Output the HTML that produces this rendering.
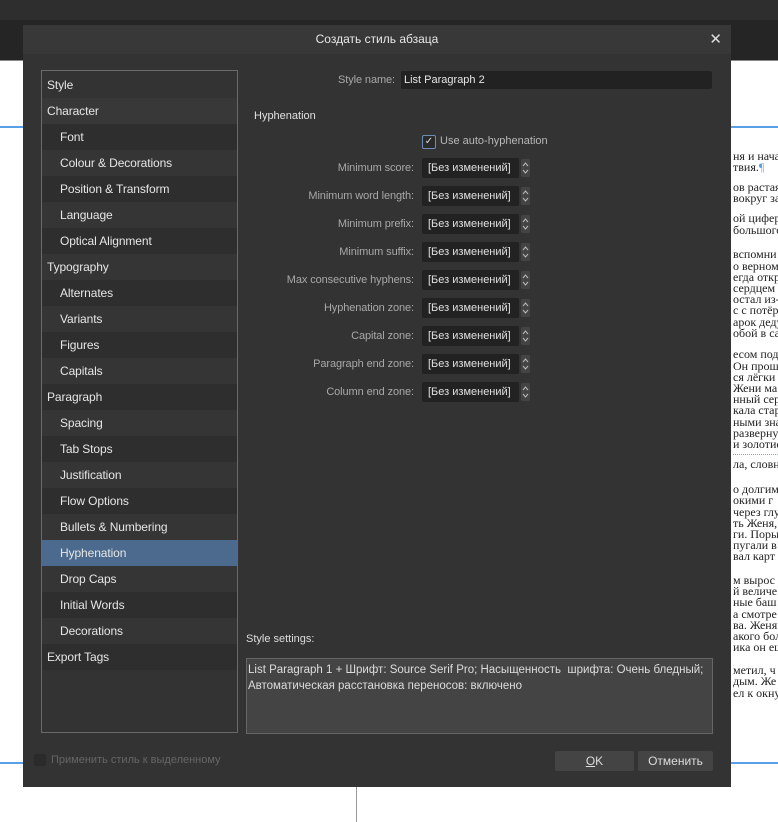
<!DOCTYPE html>
<html><head><meta charset="utf-8"><style>
*{margin:0;padding:0;box-sizing:border-box}
body{width:778px;height:822px;overflow:hidden;background:#fff;position:relative;font-family:"Liberation Sans","DejaVu Sans",sans-serif;font-size:12px;color:#ddd}
.a{position:absolute}
.row{position:absolute;left:0;width:195px;height:26px;line-height:26px;color:#e6e6e6;font-size:12px;letter-spacing:-0.1px}
.lbl{position:absolute;right:364px;color:#a8a8a8;font-size:11px;white-space:nowrap;letter-spacing:-0.1px}
.fld{position:absolute;left:422px;width:97px;height:20px;background:#222;border-radius:2px;color:#e0e0e0;font-size:11px;line-height:20px;padding-left:6px}
.sp{position:absolute;left:521px;width:9px;height:18px;background:#444;border-radius:2px}
.sp svg{position:absolute;left:1px;top:2px}
.rt{position:absolute;left:733px;font-family:"Liberation Serif",serif;font-size:12px;color:#222;white-space:nowrap;line-height:12px}
</style></head><body>
<div class="a" style="left:0;top:0;width:778px;height:20px;background:#2e2e2e"></div>
<div class="a" style="left:0;top:20px;width:778px;height:40px;background:#252525"></div>
<div class="a" style="left:0;top:60px;width:778px;height:1px;background:#888"></div>
<div class="a" style="left:0;top:126px;width:23px;height:2px;background:#5aa0e6"></div>
<div class="a" style="left:731px;top:126px;width:47px;height:2px;background:#5aa0e6"></div>
<div class="a" style="left:0;top:762px;width:23px;height:2px;background:#5aa0e6"></div>
<div class="a" style="left:731px;top:762px;width:47px;height:2px;background:#5aa0e6"></div>
<div class="a" style="left:356px;top:787px;width:1px;height:35px;background:#999"></div>

<div class="rt" style="top:150px">ня и нача</div>
<div class="rt" style="top:161px">твия.<span style="color:#5aa0e6">¶</span></div>
<div class="rt" style="top:181px">ов растая</div>
<div class="rt" style="top:192px">вокруг за</div>
<div class="rt" style="top:212px">ой цифер</div>
<div class="rt" style="top:224px">большого</div>
<div class="rt" style="top:248px">вспомни</div>
<div class="rt" style="top:260px">о верном</div>
<div class="rt" style="top:271px">егда откр</div>
<div class="rt" style="top:282px">сердцем</div>
<div class="rt" style="top:293px">остал из-</div>
<div class="rt" style="top:304px">с с потёр</div>
<div class="rt" style="top:316px">арок деду</div>
<div class="rt" style="top:327px">обой в са</div>
<div class="rt" style="top:348px">есом под</div>
<div class="rt" style="top:360px">Он прош</div>
<div class="rt" style="top:371px">ся лёгки</div>
<div class="rt" style="top:382px">Жени ма</div>
<div class="rt" style="top:393px">нный сер</div>
<div class="rt" style="top:404px">кала стар</div>
<div class="rt" style="top:416px">ными зна</div>
<div class="rt" style="top:427px">развернул</div>
<div class="rt" style="top:438px">и золотис</div>
<div class="a" style="left:733px;top:454px;width:45px;border-top:1px dotted #8ab"></div>
<div class="rt" style="top:458px">ла, словн</div>
<div class="rt" style="top:483px">о долгим</div>
<div class="rt" style="top:494px">окими г</div>
<div class="rt" style="top:506px">через глу</div>
<div class="rt" style="top:517px">ть Женя,</div>
<div class="rt" style="top:528px">ги. Поры</div>
<div class="rt" style="top:539px">пугали в</div>
<div class="rt" style="top:550px">вал карт</div>
<div class="rt" style="top:574px">м вырос</div>
<div class="rt" style="top:585px">й величе</div>
<div class="rt" style="top:596px">ные баш</div>
<div class="rt" style="top:608px">а смотре</div>
<div class="rt" style="top:619px">ва. Женя</div>
<div class="rt" style="top:630px">акого бол</div>
<div class="rt" style="top:641px">ика он ещ</div>
<div class="rt" style="top:664px">метил, ч</div>
<div class="rt" style="top:675px">дым. Же</div>
<div class="rt" style="top:687px">ел к окну</div>

<div class="a" style="left:23px;top:25px;width:708px;height:762px;background:#333">
 <div class="a" style="left:0;top:0;width:708px;height:29px;background:#383838;text-align:center;line-height:29px;color:#e8e8e8;font-size:12px">Создать стиль абзаца</div>
 <div class="a" style="right:9px;top:5px;color:#ddd;font-size:15px">✕</div>
</div>

<div class="a" style="left:41px;top:70px;width:197px;height:663px;border:1px solid #6a6a6a;background:#333">
 <div class="row" style="top:1px;background:#333;padding-left:5px">Style</div>
 <div class="row" style="top:27px;background:#383838;padding-left:5px">Character</div>
 <div class="row" style="top:53px;background:#2e2e2e;padding-left:18px">Font</div>
 <div class="row" style="top:79px;background:#353535;padding-left:18px">Colour &amp; Decorations</div>
 <div class="row" style="top:105px;background:#2e2e2e;padding-left:18px">Position &amp; Transform</div>
 <div class="row" style="top:131px;background:#353535;padding-left:18px">Language</div>
 <div class="row" style="top:157px;background:#2e2e2e;padding-left:18px">Optical Alignment</div>
 <div class="row" style="top:183px;background:#353535;padding-left:5px">Typography</div>
 <div class="row" style="top:209px;background:#2e2e2e;padding-left:18px">Alternates</div>
 <div class="row" style="top:235px;background:#353535;padding-left:18px">Variants</div>
 <div class="row" style="top:261px;background:#2e2e2e;padding-left:18px">Figures</div>
 <div class="row" style="top:287px;background:#353535;padding-left:18px">Capitals</div>
 <div class="row" style="top:313px;background:#2e2e2e;padding-left:5px">Paragraph</div>
 <div class="row" style="top:339px;background:#353535;padding-left:18px">Spacing</div>
 <div class="row" style="top:365px;background:#2e2e2e;padding-left:18px">Tab Stops</div>
 <div class="row" style="top:391px;background:#353535;padding-left:18px">Justification</div>
 <div class="row" style="top:417px;background:#2e2e2e;padding-left:18px">Flow Options</div>
 <div class="row" style="top:443px;background:#353535;padding-left:18px">Bullets &amp; Numbering</div>
 <div class="row" style="top:469px;background:#4b6a8d;padding-left:18px">Hyphenation</div>
 <div class="row" style="top:495px;background:#353535;padding-left:18px">Drop Caps</div>
 <div class="row" style="top:521px;background:#2e2e2e;padding-left:18px">Initial Words</div>
 <div class="row" style="top:547px;background:#353535;padding-left:18px">Decorations</div>
 <div class="row" style="top:573px;background:#2e2e2e;padding-left:5px">Export Tags</div>
</div>

<div class="lbl" style="top:74px;right:383px">Style name:</div>
<div class="a" style="left:401px;top:71px;width:311px;height:18px;background:#222;border-radius:2px;color:#e6e6e6;font-size:11px;line-height:18px;padding-left:3px">List Paragraph 2</div>
<div class="a" style="left:254px;top:110px;color:#e0e0e0;font-size:11px">Hyphenation</div>
<div class="a" style="left:422px;top:135px;width:14px;height:14px;border:1px solid #6d8fb5;border-radius:2px;background:#2a2a2a;color:#ddd;font-size:10px;line-height:12px;text-align:center">✓</div>
<div class="a" style="left:440px;top:135px;color:#b8b8b8;font-size:11px">Use auto-hyphenation</div>

<div class="lbl" style="top:162px">Minimum score:</div><div class="fld" style="top:158px">[Без изменений]</div><div class="sp" style="top:159px"><svg width="7" height="14"><path d="M1 5 L3.5 2 L6 5 M1 9 L3.5 12 L6 9" stroke="#bbb" fill="none"/></svg></div>
<div class="lbl" style="top:190px">Minimum word length:</div><div class="fld" style="top:186px">[Без изменений]</div><div class="sp" style="top:187px"><svg width="7" height="14"><path d="M1 5 L3.5 2 L6 5 M1 9 L3.5 12 L6 9" stroke="#bbb" fill="none"/></svg></div>
<div class="lbl" style="top:218px">Minimum prefix:</div><div class="fld" style="top:214px">[Без изменений]</div><div class="sp" style="top:215px"><svg width="7" height="14"><path d="M1 5 L3.5 2 L6 5 M1 9 L3.5 12 L6 9" stroke="#bbb" fill="none"/></svg></div>
<div class="lbl" style="top:246px">Minimum suffix:</div><div class="fld" style="top:242px">[Без изменений]</div><div class="sp" style="top:243px"><svg width="7" height="14"><path d="M1 5 L3.5 2 L6 5 M1 9 L3.5 12 L6 9" stroke="#bbb" fill="none"/></svg></div>
<div class="lbl" style="top:274px">Max consecutive hyphens:</div><div class="fld" style="top:270px">[Без изменений]</div><div class="sp" style="top:271px"><svg width="7" height="14"><path d="M1 5 L3.5 2 L6 5 M1 9 L3.5 12 L6 9" stroke="#bbb" fill="none"/></svg></div>
<div class="lbl" style="top:302px">Hyphenation zone:</div><div class="fld" style="top:298px">[Без изменений]</div><div class="sp" style="top:299px"><svg width="7" height="14"><path d="M1 5 L3.5 2 L6 5 M1 9 L3.5 12 L6 9" stroke="#bbb" fill="none"/></svg></div>
<div class="lbl" style="top:330px">Capital zone:</div><div class="fld" style="top:326px">[Без изменений]</div><div class="sp" style="top:327px"><svg width="7" height="14"><path d="M1 5 L3.5 2 L6 5 M1 9 L3.5 12 L6 9" stroke="#bbb" fill="none"/></svg></div>
<div class="lbl" style="top:358px">Paragraph end zone:</div><div class="fld" style="top:354px">[Без изменений]</div><div class="sp" style="top:355px"><svg width="7" height="14"><path d="M1 5 L3.5 2 L6 5 M1 9 L3.5 12 L6 9" stroke="#bbb" fill="none"/></svg></div>
<div class="lbl" style="top:386px">Column end zone:</div><div class="fld" style="top:382px">[Без изменений]</div><div class="sp" style="top:383px"><svg width="7" height="14"><path d="M1 5 L3.5 2 L6 5 M1 9 L3.5 12 L6 9" stroke="#bbb" fill="none"/></svg></div>

<div class="a" style="left:246px;top:633px;color:#ddd;font-size:11px">Style settings:</div>
<div class="a" style="left:246px;top:658px;width:467px;height:76px;border:1px solid #666;background:#444;color:#ddd;font-size:11.5px;line-height:16px;padding:3px 1px;letter-spacing:0;white-space:nowrap;overflow:hidden">List Paragraph 1 + Шрифт: Source Serif Pro; Насыщенность&nbsp; шрифта: Очень бледный;<br>Автоматическая расстановка переносов: включено</div>

<div class="a" style="left:34px;top:754px;width:12px;height:12px;background:#2a2a2a;border-radius:2px"></div>
<div class="a" style="left:51px;top:754px;color:#666;font-size:11px">Применить стиль к выделенному</div>
<div class="a" style="left:555px;top:751px;width:79px;height:20px;background:#444;border-radius:2px;text-align:center;line-height:20px;color:#ddd;font-size:12px"><u>O</u>K</div>
<div class="a" style="left:638px;top:751px;width:75px;height:20px;background:#444;border-radius:2px;text-align:center;line-height:20px;color:#ddd;font-size:12px">Отменить</div>
</body></html>
